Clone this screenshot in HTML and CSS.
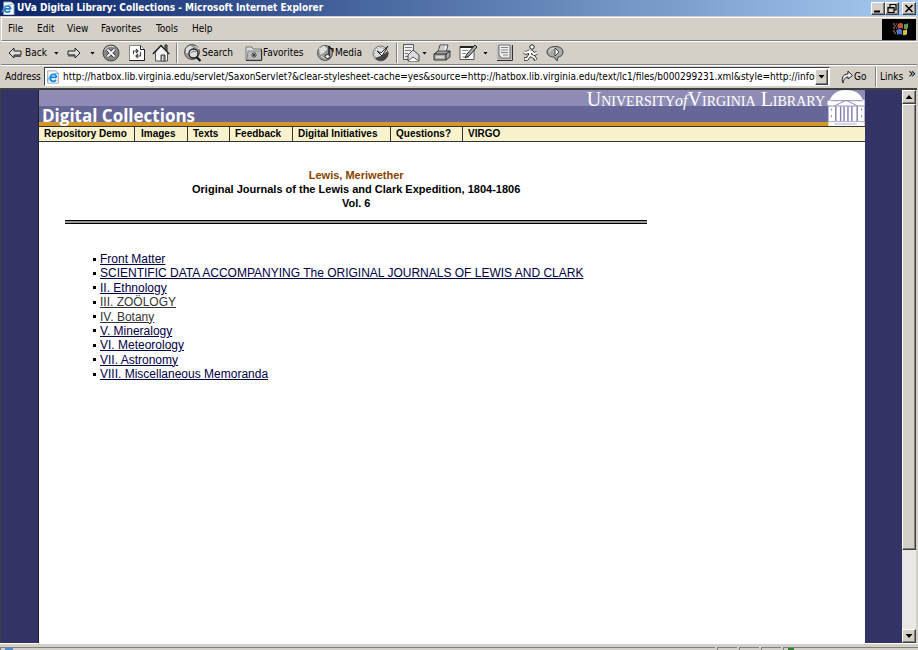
FILE: index.html
```html
<!DOCTYPE html>
<html lang="en">
<head>
<meta charset="utf-8">
<title>UVa Digital Library: Collections</title>
<link rel="stylesheet" href="styles.css">
</head>
<body>
<header class="titlebar">
  <svg class="page-icon" viewBox="0 0 16 16" aria-hidden="true"><path d="M3 1h9l3 3v12H3z" fill="#fff" stroke="#789"/><path d="M11 9H4a3.500 3.500 0 1 1 7 0M10.500 11a3.500 3.500 0 0 1-6.500-2" fill="none" stroke="#1a78d0" stroke-width="2"/><path d="M1 13C1 9 8 3 13 4" fill="none" stroke="#59b0ee"/></svg>
  <h1 class="window-title">UVa Digital Library: Collections - Microsoft Internet Explorer</h1>
  <div class="window-buttons">
    <button class="bevel win" aria-label="Minimize"><svg viewBox="0 0 12 11"><path d="M2 8.500h6" stroke="#000" stroke-width="2"/></svg></button>
    <button class="bevel win" aria-label="Restore"><svg viewBox="0 0 12 11"><path d="M4 4V1.500h6V7H8M4 1.500h6M2 4.500h6v5H2zM2 5h6" fill="none" stroke="#000" stroke-width="1.200"/></svg></button>
    <button class="bevel win close" aria-label="Close"><svg viewBox="0 0 12 11"><path d="M2.500 2l7 7M9.500 2l-7 7" stroke="#000" stroke-width="1.600"/></svg></button>
  </div>
</header>

<nav class="menubar" aria-label="Menu">
  <button class="menu file">File</button><button class="menu edit">Edit</button><button class="menu view">View</button><button class="menu favs">Favorites</button><button class="menu tools">Tools</button><button class="menu">Help</button>
  <svg class="throbber" viewBox="0 0 34 21" aria-hidden="true"><rect width="34" height="21" fill="#000"/><path d="M16 5q3-2 5 0v5q-2-2-5 0z" fill="#c5533d"/><path d="M22 5q2 1 4-1v5q-2 2-4 1z" fill="#5aa050"/><path d="M15 11q3-2 5 0v5q-2-2-5 0z" fill="#4a78c8"/><path d="M21 11q2 1 4-1v5q-2 2-4 1z" fill="#d9bd3e"/><path d="M11 5h4M12 7h4M11 9h4M11 12h4M12 14h3" stroke="#b98b7d" stroke-dasharray="2 1"/></svg>
</nav>

<div class="toolbar">
  <button class="tool back"><svg class="arrow" viewBox="0 0 14 14"><path d="M1 7l5-5v3h7v4H6v3z" fill="#ddd" stroke="#222"/><path d="M6 10h7" stroke="#555" stroke-width="2"/></svg>Back<i class="caret"></i></button>
  <button class="tool forward" aria-label="Forward"><svg class="arrow" viewBox="0 0 14 14"><path d="M13 7L8 2v3H1v4h7v3z" fill="#ddd" stroke="#222"/><path d="M1 9.500h7" stroke="#555" stroke-width="2"/></svg><i class="caret"></i></button>
  <button class="tool stop" aria-label="Stop"><svg viewBox="0 0 18 18"><circle cx="9" cy="9" r="8" fill="#888" stroke="#444"/><path d="M3 6a6.500 6.500 0 0 1 9-3" fill="none" stroke="#ddd"/><path d="M5.500 5.500l7 7m0-7l-7 7" stroke="#333" stroke-width="3.500"/><path d="M5.500 5.500l7 7m0-7l-7 7" stroke="#fff" stroke-width="1.800"/></svg></button>
  <button class="tool refresh" aria-label="Refresh"><svg viewBox="0 0 18 18"><path d="M1.500 1.500h11l4 4v11h-15z" fill="#fff" stroke="#888"/><path d="M12.500 1.500v4h4v11h-15" fill="none" stroke="#222"/><path d="M5.500 10V7H10M8 5l2 2-2 2M12.500 8v4H8m2-2l-2 2 2 2" fill="none" stroke="#444" stroke-width="1.200"/></svg></button>
  <button class="tool home" aria-label="Home"><svg viewBox="0 0 18 18"><path d="M13 5V1h2v6" fill="#888" stroke="#222"/><path d="M3.500 8v9h12V8L9 2z" fill="#f5f5f5" stroke="#555"/><path d="M.8 10L9 1.500l8.200 8.500" fill="none" stroke="#222" stroke-width="1.300"/><path d="M9 11h4v6H9z" fill="#999" stroke="#444"/><path d="M10.500 12v5" stroke="#ddd"/></svg></button>
  <span class="sep"></span>
  <button class="tool search"><svg viewBox="0 0 18 18"><circle cx="8" cy="8" r="7.500" fill="#999" stroke="#555"/><path d="M2 5l4-3 3 2-4 4-3 1M11 2l4 3" fill="#ddd" stroke="#ddd"/><circle cx="9.500" cy="9.500" r="4.500" fill="#ddd" stroke="#222" stroke-width="1.300"/><path d="M12.500 13l4 4" stroke="#111" stroke-width="2.200"/><path d="M7 9q2-3 5-1" stroke="#777" fill="none"/></svg>Search</button>
  <button class="tool favorites"><svg viewBox="0 0 18 18"><path d="M1 5V3h6l1 2h8v11H1z" fill="#ddd" stroke="#777"/><path d="M3 7h14v9H2z" fill="#bbb" stroke="#888"/><path d="M16.500 5v11.500H1" fill="none" stroke="#333"/><path d="M9 8v6M6 11h6M7 9l4 4m0-4l-4 4" stroke="#333" stroke-width=".8"/></svg>Favorites</button>
  <button class="tool media"><svg viewBox="0 0 18 18"><circle cx="8" cy="9" r="7.500" fill="#999" stroke="#555"/><path d="M2 5l5-3 3 3-4 4-3 1M4 12l5 3" fill="#ddd" stroke="#ddd"/><path d="M12 12V2q1 3 4 3v3" fill="none" stroke="#111" stroke-width="1.300"/><ellipse cx="10.500" cy="12.500" rx="2.500" ry="2" fill="#eee" stroke="#222"/></svg>Media</button>
  <button class="tool history" aria-label="History"><svg viewBox="0 0 18 18"><circle cx="8.500" cy="9.500" r="7.500" fill="#ddd" stroke="#777"/><circle cx="8.500" cy="9.500" r="6" fill="none" stroke="#666" stroke-dasharray="1 2"/><path d="M3 14a7.500 7.500 0 0 0 13-7L9 12z" fill="#444"/><path d="M5 7l4 2 7-7-6 10z" fill="#fff" stroke="#222"/></svg></button>
  <span class="sep narrow"></span>
  <button class="tool mail" aria-label="Mail"><svg viewBox="0 0 18 18"><path d="M1.500.5h10v15h-10z" fill="#eee" stroke="#555"/><path d="M3 3.500h7M3 6.500h6M3 9.500h3M3 12.500h3" stroke="#777"/><path d="M6 11l5-5 6 5v6H6z" fill="#ddd" stroke="#444"/><path d="M6 17l5-4 6 4" fill="#fff" stroke="#555"/></svg><i class="caret"></i></button>
  <button class="tool print" aria-label="Print"><svg viewBox="0 0 18 18"><path d="M5 8l2-7h8l-2 7" fill="#fff" stroke="#444"/><path d="M7 3h5M7 5h5" stroke="#999"/><path d="M1 10l4-3h12v6l-4 3H1z" fill="#aaa" stroke="#333"/><path d="M1 10h12v6M13 10l4-3" fill="none" stroke="#222"/><path d="M3 13h8" stroke="#fff"/></svg></button>
  <button class="tool editpage" aria-label="Edit page"><svg viewBox="0 0 18 18"><path d="M1 2.500h14v13H1z" fill="#fff" stroke="#555"/><path d="M1 3h14" stroke="#222" stroke-width="2"/><path d="M3 6.500h6M3 9.500h4M3 13h7" stroke="#888"/><path d="M16 1l2 2-8 9-4 2 2-4z" fill="#aaa" stroke="#222"/></svg><i class="caret"></i></button>
  <button class="tool discuss" aria-label="Discuss"><svg viewBox="0 0 18 18"><path d="M1 1h15v15H1z" fill="#aaa" stroke="#ccc"/><path d="M16.500 1v15.500H1" fill="none" stroke="#333"/><path d="M3 1h11v13H6l-3-3z" fill="#eee" stroke="#777"/><path d="M5 3.500h7M5 6h7M5 8.500h7M7 11h5" stroke="#666" stroke-width=".8"/></svg></button>
  <button class="tool messenger" aria-label="Messenger"><svg viewBox="0 0 18 18"><path d="M8 7L4 9 2 8M9 7l3 3 3-1M8 7L8 11l4 2 2 3M8 11l-3 4H2" fill="none" stroke="#222" stroke-width="3.500" stroke-linejoin="round"/><circle cx="10" cy="3" r="2.200" fill="#fff" stroke="#222"/><path d="M8 7L4 9 2 8M9 7l3 3 3-1M8 7L8 11l4 2 2 2.500M8 11l-3 4H2.500" fill="none" stroke="#fff" stroke-width="2"/></svg></button>
  <button class="tool chat" aria-label="Chat"><svg viewBox="0 0 18 18"><path d="M9 2.500c5 0 8 2 8 5.500s-3 5-5 5l-1 4-3-4C4 13 1 11 1 8s3-5.500 8-5.500z" fill="#aaa" stroke="#444"/><path d="M3 8q1-4 6-4" fill="none" stroke="#eee"/><path d="M9 4v8l4-4z" fill="#fff" stroke="#444"/></svg></button>
</div>

<form class="addressbar">
  <label class="address-label" for="url">Address</label>
  <div class="address-box">
    <svg class="page-icon" viewBox="0 0 16 16" aria-hidden="true"><path d="M2 1h9l3 3v11H2z" fill="#fff" stroke="#89a"/><path d="M12 8.500H5a3.500 3.500 0 1 1 7 0M11.500 11A3.500 3.500 0 0 1 5 8.500" fill="none" stroke="#1684dc" stroke-width="2"/><path d="M2 13C1 9 8 3 14 4" fill="none" stroke="#35a2ef"/></svg>
    <input class="url" id="url" type="text" value="http://hatbox.lib.virginia.edu/servlet/SaxonServlet?&amp;clear-stylesheet-cache=yes&amp;source=http://hatbox.lib.virginia.edu/text/lc1/files/b000299231.xml&amp;style=http://infocomm">
    <button class="bevel drop" type="button" aria-label="Show addresses"><i class="caret"></i></button>
  </div>
  <button class="go" type="button"><svg viewBox="0 0 12 14"><path d="M2 13C0 8 2 4 7 4V1l4.500 4.500L7 9V7C4 7 3 9 2 13z" fill="#eee" stroke="#222"/></svg>Go</button>
  <button class="links" type="button">Links<span class="more">»</span></button>
</form>

<div class="viewport">
  <main class="page">
    <header class="banner">
      <h2 class="section-name">Digital Collections</h2>
      <p class="library-name">University<em>of</em>Virginia <span>Library</span></p>
      <svg class="rotunda" viewBox="0 0 38 37" aria-hidden="true"><path d="M1 16v21h37V10h-2C34 3 27 0 19 0S5 3 2 11H0v5z" fill="#fff"/><path d="M3 11h33M0 16.500h38M7 16.500l12-6 12 6" fill="none" stroke="#8d8bb8"/><path d="M8.500 17v15M13.500 17v15M17 17v15M21 17v15M25 17v15M30.500 17v15" stroke="#8381b4" stroke-width="1.500"/><path d="M0 32.500h38M7 35h23" stroke="#aaa8cc"/><path d="M4 19v12M35 19v12" stroke="#77a" stroke-dasharray="2 5"/></svg>
    </header>
    <nav class="sections" aria-label="Library">
      <a class="demo" href="#">Repository Demo</a><a class="images" href="#">Images</a><a class="texts" href="#">Texts</a><a class="feedback" href="#">Feedback</a><a class="initiatives" href="#">Digital Initiatives</a><a class="questions" href="#">Questions?</a><a class="virgo" href="#">VIRGO</a>
    </nav>
    <article class="work">
      <div class="heading">
        <p class="author">Lewis, Meriwether</p>
        <p>Original Journals of the Lewis and Clark Expedition, 1804-1806</p>
        <p>Vol. 6</p>
      </div>
      <hr class="rule">
      <ul class="contents">
        <li><a href="#">Front Matter</a></li>
        <li><a href="#">SCIENTIFIC DATA ACCOMPANYING The ORIGINAL JOURNALS OF LEWIS AND CLARK</a></li>
        <li><a href="#">II. Ethnology</a></li>
        <li><a class="visited" href="#">III. ZOÖLOGY</a></li>
        <li><a class="visited" href="#">IV. Botany</a></li>
        <li><a href="#">V. Mineralogy</a></li>
        <li><a href="#">VI. Meteorology</a></li>
        <li><a href="#">VII. Astronomy</a></li>
        <li><a href="#">VIII. Miscellaneous Memoranda</a></li>
      </ul>
    </article>
  </main>
  <div class="scrollbar">
    <button class="bevel step" aria-label="Scroll up"><i class="caret up"></i></button>
    <div class="bevel thumb"></div>
    <div class="track"></div>
    <button class="bevel step" aria-label="Scroll down"><i class="caret"></i></button>
  </div>
</div>
<footer class="status"><span class="message"><i class="doc"></i></span><span class="cell"></span><span class="cell"></span><span class="cell"></span><span class="zone"><i class="globe"></i></span></footer>
</body>
</html>
```
FILE: styles.css
```css
* { box-sizing: border-box; }
body {
  margin: 0;
  height: 100vh;
  display: flex;
  flex-direction: column;
  overflow: hidden;
  background: #d4d0c8;
  color: #000;
  font: 10px/14px "DejaVu Sans Condensed", "DejaVu Sans", sans-serif;
}
h1, h2, p, ul { margin: 0; padding: 0; }
button { padding: 0; border: 0; background: none; color: inherit; font: inherit; text-align: left; white-space: nowrap; }
svg { display: block; flex: none; }
i { display: block; flex: none; }

.bevel {
  background: #d4d0c8;
  border: 1px solid;
  border-color: #fff #404040 #404040 #fff;
  box-shadow: inset -1px -1px #808080;
}
.caret { width: 5px; height: 3px; background: #000; clip-path: polygon(0 0, 100% 0, 50% 100%); }
.caret.up { clip-path: polygon(50% 0, 100% 100%, 0 100%); }

.titlebar {
  flex: none;
  height: 16px;
  display: flex;
  align-items: center;
  gap: 2px;
  padding: 0 2px 0 1px;
  background: linear-gradient(90deg, #0a246a, #a6caf0);
}
.page-icon { width: 14px; height: 14px; }
.window-title { flex: 1; color: #fff; font: bold 10px/14px "DejaVu Sans Condensed", sans-serif; white-space: nowrap; }
.window-buttons { display: flex; }
.win { width: 14px; height: 13px; }
.win svg { width: 12px; height: 11px; }
.close { margin-left: 3px; }

.menubar {
  flex: none;
  height: 24px;
  display: flex;
  align-items: center;
  margin: 1px 2px 0 1px;
  padding-left: 6px;
  border: 1px solid #fff;
  border-bottom-color: #808080;
  border-right: 0;
}
.file { width: 29px; }
.edit { width: 30px; }
.view { width: 34px; }
.favs { width: 55px; }
.tools { width: 36px; }
.throbber { width: 34px; height: 21px; margin-left: auto; }

.toolbar {
  flex: none;
  height: 24px;
  display: flex;
  align-items: center;
  margin: 0 1px;
  padding-left: 7px;
  border-top: 1px solid #fff;
  border-bottom: 1px solid #808080;
}
.tool { display: flex; align-items: center; flex: none; height: 20px; }
.tool svg { width: 18px; height: 18px; }
.tool .arrow { width: 14px; height: 14px; margin-right: 3px; }
.tool .caret { margin-left: 2px; }
.back { width: 59px; }
.back .caret { margin-left: 7px; }
.forward { width: 35px; }
.tool.forward .caret { margin-left: 6px; }
.stop, .print, .discuss { width: 26px; }
.refresh, .home, .history, .messenger { width: 24px; }
.search { width: 61px; }
.favorites { width: 72px; }
.media { width: 55px; }
.mail { width: 31px; }
.editpage { width: 37px; }
.editpage .caret { margin-left: 6px; }
.sep { flex: none; width: 2px; height: 20px; margin-right: 6px; border-left: 1px solid #808080; border-right: 1px solid #fff; }
.narrow { margin-right: 4px; }

.addressbar {
  flex: none;
  height: 22px;
  display: flex;
  align-items: center;
  margin: 0 2px 0 1px;
  padding-left: 4px;
  border-top: 1px solid #fff;
}
.address-label { width: 39px; }
.address-box {
  flex: 1;
  display: flex;
  align-items: center;
  height: 19px;
  min-width: 0;
  padding: 0 1px;
  background: #fff;
  border: 1px solid;
  border-color: #404040 #fff #fff #404040;
}
.url { flex: 1; min-width: 0; margin: 0 0 0 3px; padding: 0; border: 0; outline: 0; background: none; font: inherit; color: #000; }
.drop { width: 13px; height: 16px; display: flex; align-items: center; justify-content: center; }
.drop .caret { width: 7px; height: 4px; }
.go { display: flex; align-items: center; gap: 1px; width: 46px; height: 20px; padding-left: 11px; border-right: 1px solid #808080; }
.go svg { width: 12px; height: 14px; }
.links { display: flex; gap: 5px; width: 40px; height: 20px; align-items: center; padding-left: 3px; border-left: 1px solid #fff; }
.more { align-self: start; font-size: 14px; line-height: 12px; }

.viewport {
  flex: 1;
  min-height: 0;
  display: flex;
  margin: 1px 1px 0 0;
  border: solid #404040;
  border-width: 2px 0 0 1px;
  background: #333366;
}
.page { flex: 1; margin: 0 37px; border-left: 1px solid #222; background: #fff; }
.banner {
  display: flex;
  align-items: flex-start;
  height: 37px;
  padding-left: 3px;
  border-bottom: 1px solid #333;
  background: linear-gradient(#8e8cb5 0 16px, #666699 16px 32px, #d3962b 32px);
}
.section-name { align-self: flex-end; flex: 1; color: #fff; font: bold 17px/20px "Open Sans", sans-serif; }
.library-name { color: #fff; font: 20px/18px "Liberation Serif", serif; font-variant: small-caps; }
.library-name em { font-size: 16px; font-variant: normal; }
.rotunda { width: 38px; height: 36px; margin-left: 2px; }
.sections {
  display: flex;
  height: 15px;
  background: #f9f3cd;
  border-bottom: 1px solid #333;
  font: bold 10px/14px "Liberation Sans", sans-serif;
}
.sections a { padding-left: 5px; border-right: 1px solid #333; color: #000; text-decoration: none; white-space: nowrap; }
.sections .demo { width: 96px; }
.sections .images { width: 53px; padding-left: 6px; }
.sections .texts { width: 42px; }
.sections .feedback { width: 63px; }
.sections .initiatives { width: 98px; }
.sections .questions { width: 72px; }
.sections .virgo { border: 0; }

.work { width: 70.5%; margin: 26px 0 0 26px; font-family: "Liberation Sans", sans-serif; }
.heading { text-align: center; font-size: 11px; font-weight: bold; }
.author { color: #884400; }
.rule { height: 4px; margin: 10px 0 28px; border: solid #000; border-width: 1px 0; background: #999; }
.contents {
  display: flex;
  flex-direction: column;
  justify-content: space-between;
  height: 129px;
  padding-left: 28px;
  list-style: none;
  font-size: 12px;
}
.contents li { display: flex; align-items: center; white-space: nowrap; }
.contents li::before { content: ""; width: 3px; height: 3px; margin-right: 4px; background: #000; }
.contents a { color: #000044; }
.contents .visited { color: #333; }

.scrollbar { flex: none; width: 15px; padding-right: 1px; display: flex; flex-direction: column; }
.step { flex: none; height: 14px; display: flex; align-items: center; justify-content: center; }
.step .caret { width: 7px; height: 4px; }
.thumb { flex: 447; }
.track { flex: 80; background: #eae8e4; }
.scrollbar { background: linear-gradient(90deg, #eae8e4 14px, #d4d0c8 14px); }

.status { flex: none; display: flex; gap: 2px; height: 7px; padding-top: 3px; border-top: 1px solid #fff; }
.status span { height: 3px; border: solid #808080; border-width: 1px 0 0 1px; }
.message { flex: 1; }
.cell { width: 20px; }
.zone { width: 135px; }
.doc { width: 8px; height: 2px; margin-left: 4px; background: #4a8fd8; }
.globe { width: 6px; height: 2px; margin-left: 4px; background: #2a8a2a; }
```
